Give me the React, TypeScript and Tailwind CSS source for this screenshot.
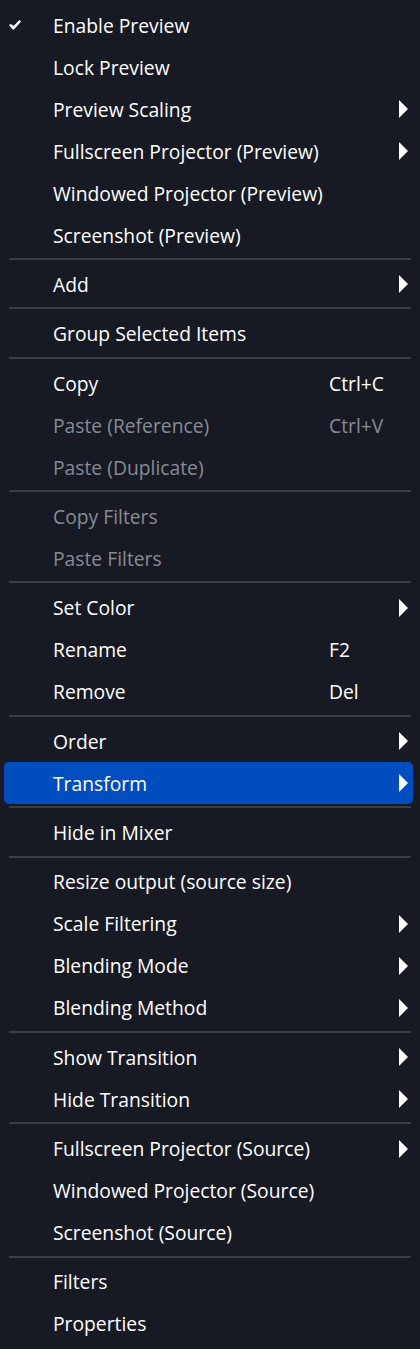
import React from 'react'

type Entry =
  | { sep: true }
  | { sep?: false; label: string; checked?: boolean; submenu?: boolean; shortcut?: string; disabled?: boolean; active?: boolean }

const menu: Entry[] = [
  { label: 'Enable Preview', checked: true },
  { label: 'Lock Preview' },
  { label: 'Preview Scaling', submenu: true },
  { label: 'Fullscreen Projector (Preview)', submenu: true },
  { label: 'Windowed Projector (Preview)' },
  { label: 'Screenshot (Preview)' },
  { sep: true },
  { label: 'Add', submenu: true },
  { sep: true },
  { label: 'Group Selected Items' },
  { sep: true },
  { label: 'Copy', shortcut: 'Ctrl+C' },
  { label: 'Paste (Reference)', shortcut: 'Ctrl+V', disabled: true },
  { label: 'Paste (Duplicate)', disabled: true },
  { sep: true },
  { label: 'Copy Filters', disabled: true },
  { label: 'Paste Filters', disabled: true },
  { sep: true },
  { label: 'Set Color', submenu: true },
  { label: 'Rename', shortcut: 'F2' },
  { label: 'Remove', shortcut: 'Del' },
  { sep: true },
  { label: 'Order', submenu: true },
  { label: 'Transform', submenu: true, active: true },
  { sep: true },
  { label: 'Hide in Mixer' },
  { sep: true },
  { label: 'Resize output (source size)' },
  { label: 'Scale Filtering', submenu: true },
  { label: 'Blending Mode', submenu: true },
  { label: 'Blending Method', submenu: true },
  { sep: true },
  { label: 'Show Transition', submenu: true },
  { label: 'Hide Transition', submenu: true },
  { sep: true },
  { label: 'Fullscreen Projector (Source)', submenu: true },
  { label: 'Windowed Projector (Source)' },
  { label: 'Screenshot (Source)' },
  { sep: true },
  { label: 'Filters' },
  { label: 'Properties' },
]

// chunky little tick, like the Qt one
function Check() {
  return (
    <svg width="12" height="10" viewBox="0 0 12 10" className="block">
      <path d="M0 5 L2 4 L4.5 6 L10.5 0 L12 1.5 L5 9.5 L3.5 9.5 Z" fill="#ffffff" />
    </svg>
  )
}

function Arrow() {
  return (
    <svg width="9" height="18" viewBox="0 0 9 18" className="block">
      <polygon points="0,0 9,9 0,18" fill="#ffffff" />
    </svg>
  )
}

export default function App() {
  return (
    <div
      className="w-[420px] min-h-[1349px] bg-[#181a23] pt-[4px] text-[19.3px] text-white"
      style={{ fontFamily: '"Open Sans", "Noto Sans", sans-serif' }}
    >
      {menu.map((item, i) =>
        item.sep ? (
          <div key={i} className="h-[7.36px] pt-[2px] px-[9px]">
            <div className="h-[2px] bg-[#3a3c46]" />
          </div>
        ) : (
          <div
            key={i}
            className={
              'relative flex items-center h-[42px] ml-[4px] mr-[7px] rounded-[5px] ' +
              (item.active ? 'bg-[#004dbf]' : '')
            }
          >
            <div className="w-[49px] flex justify-start pl-[5px]">
              {item.checked && <Check />}
            </div>
            <span className={'pt-[2px] ' + (item.disabled ? 'text-[#868b94]' : 'text-white')}>{item.label}</span>
            {item.shortcut && (
              <span className={'absolute left-[325px] pt-[2px] ' + (item.disabled ? 'text-[#868b94]' : 'text-white')}>
                {item.shortcut}
              </span>
            )}
            {item.submenu && (
              <div className="ml-auto mr-[5px]">
                <Arrow />
              </div>
            )}
          </div>
        )
      )}
    </div>
  )
}
